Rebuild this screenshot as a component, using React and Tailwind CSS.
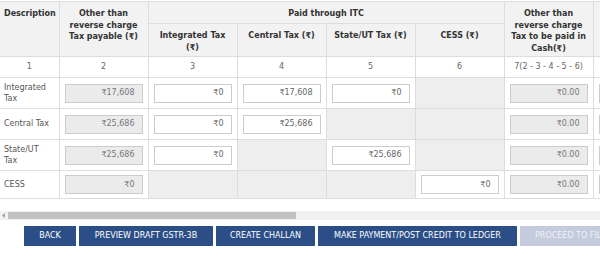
import React from 'react';

const rows = [
  { label: 'Integrated Tax', payable: '₹17,608', itc: ['₹0', '₹17,608', '₹0', null], cash: '₹0.00', h: 'h-[31px]' },
  { label: 'Central Tax', payable: '₹25,686', itc: ['₹0', '₹25,686', null, null], cash: '₹0.00', h: 'h-[31px]' },
  { label: 'State/UT Tax', payable: '₹25,686', itc: ['₹0', null, '₹25,686', null], cash: '₹0.00', h: 'h-[31px]' },
  { label: 'CESS', payable: '₹0', itc: [null, null, null, '₹0'], cash: '₹0.00', h: 'h-[28px]' },
];

const extraHeads = [
  'Reverse charge Tax payable (₹)',
  'Reverse charge Tax to be paid in Cash(₹)',
  'Interest payable (₹)',
  'Interest to be paid in Cash(₹)',
  'Late Fee Payable (₹)',
  'Late Fee to be paid in Cash(₹)',
];

const buttons = [
  { label: 'BACK', w: 'w-[52px]' },
  { label: 'PREVIEW DRAFT GSTR-3B', w: 'w-[134px]' },
  { label: 'CREATE CHALLAN', w: 'w-[99px]' },
  { label: 'MAKE PAYMENT/POST CREDIT TO LEDGER', w: 'w-[199px]' },
];

function Field({ value, readOnly }) {
  return (
    <div
      className={`h-[19px] w-full flex items-center justify-end pr-[7px] border border-[#cccccc] ${
        readOnly ? 'bg-[#ebebeb] text-[#777]' : 'bg-white text-[#666]'
      }`}
    >
      {value}
    </div>
  );
}

export default function App() {
  const th = 'border border-[#dddddd] bg-[#f2f2f2] font-bold text-[#333] text-center align-top px-[5px] pt-[6px]';
  const td = 'border border-[#dddddd] px-[5px] py-[3px] align-middle';

  return (
    <div className="w-[600px] h-[261px] bg-white overflow-hidden pt-px text-[8px] leading-[11.5px] text-[#555]" style={{ fontFamily: '"DejaVu Sans", Verdana, sans-serif' }}>
      <div className="overflow-hidden">
        <table className="table-fixed border-collapse w-[1216px]">
          <colgroup>
            <col className="w-[59px]" />
            {Array.from({ length: 13 }).map((_, i) => (
              <col key={i} className="w-[89px]" />
            ))}
          </colgroup>
          <thead>
            <tr className="h-[22px]">
              <th rowSpan={2} className={`${th} border-l-0 text-left pl-[4px]`}>Description</th>
              <th rowSpan={2} className={th}>Other than reverse charge Tax payable (₹)</th>
              <th colSpan={4} className={th}>Paid through ITC</th>
              <th rowSpan={2} className={th}>Other than reverse charge Tax to be paid in Cash(₹)</th>
              {extraHeads.map((h) => (
                <th key={h} rowSpan={2} className={th}>{h}</th>
              ))}
            </tr>
            <tr className="h-[33px]">
              <th className={th}>Integrated Tax (₹)</th>
              <th className={th}>Central Tax (₹)</th>
              <th className={th}>State/UT Tax (₹)</th>
              <th className={th}>CESS (₹)</th>
            </tr>
          </thead>
          <tbody>
            <tr className="h-[21px]">
              {['1', '2', '3', '4', '5', '6', '7(2 - 3 - 4 - 5 - 6)', '8', '9', '10', '11', '12', '13'].map((n, i) => (
                <td key={n} className={`border border-[#dddddd] text-center text-[#666] ${i === 0 ? 'border-l-0' : ''}`}>{n}</td>
              ))}
            </tr>
            {rows.map((r) => (
              <tr key={r.label} className={r.h}>
                <td className={`${td} border-l-0 pl-[4px] pr-[9px]`}>{r.label}</td>
                <td className={td}><Field value={r.payable} readOnly /></td>
                {r.itc.map((v, i) =>
                  v === null ? (
                    <td key={i} className={`${td} bg-[#eeeeee]`} />
                  ) : (
                    <td key={i} className={td}><Field value={v} /></td>
                  )
                )}
                <td className={td}><Field value={r.cash} readOnly /></td>
                {extraHeads.map((h) => (
                  <td key={h} className={td}><Field value="₹0.00" readOnly /></td>
                ))}
              </tr>
            ))}
          </tbody>
        </table>
      </div>

      {/* fake horizontal scrollbar */}
      <div className="mt-[12px] h-[9px] bg-[#f1f1f1] flex items-center">
        <div className="w-[8px] flex justify-center">
          <svg width="4" height="5" viewBox="0 0 4 5"><path d="M3 0L0 2.5L3 5Z" fill="#a3a3a3" /></svg>
        </div>
        <div className="w-[288px] h-[7px] bg-[#c1c1c1]" />
      </div>

      <div className="flex gap-[3px] pl-[24px] mt-[6px]">
        {buttons.map((b) => (
          <div key={b.label} className={`${b.w} shrink-0 h-[20px] bg-[#2c4e86] text-white flex items-center justify-center whitespace-nowrap`}>
            {b.label}
          </div>
        ))}
        <div className="shrink-0 h-[20px] px-[15px] bg-[#c3cbdc] text-[#eef1f6] flex items-center whitespace-nowrap">
          PROCEED TO FILE
        </div>
      </div>
    </div>
  );
}
